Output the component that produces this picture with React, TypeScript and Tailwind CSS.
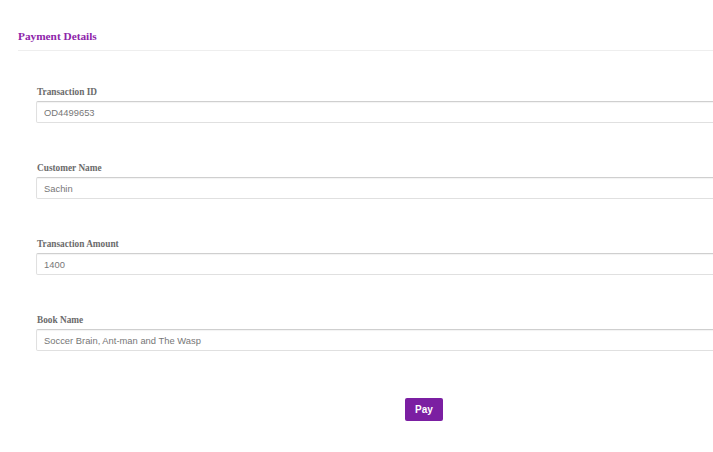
import { useState } from 'react';

const fields = [
    { label: 'Transaction ID', value: 'OD4499653' },
    { label: 'Customer Name', value: 'Sachin' },
    { label: 'Transaction Amount', value: '1400' },
    { label: 'Book Name', value: 'Soccer Brain, Ant-man and The Wasp' },
];

export default function App() {
    const [values, setValues] = useState(fields.map((f) => f.value));

    return (
        <div className="w-full min-h-[452px] overflow-hidden bg-white">
            {/* Header */}
            <div className="pt-[29px] pl-[18px]">
                <h2 className="border-b border-[#eeeeee] pb-[7px] text-[11.3px] leading-[14px] font-bold text-[#8e24aa] font-['Liberation_Serif',serif]">
                    Payment Details
                </h2>
            </div>

            {/* Form */}
            <div className="pl-[36px] pt-[35px]">
                <div className="flex w-[776px] flex-col gap-[39px]">
                    {fields.map((f, i) => (
                        <div key={f.label} className="flex flex-col">
                            <label className="mb-[3px] pl-px text-[9.3px] leading-[12px] font-bold text-[#6b6b6b] font-['Liberation_Serif',serif]">
                                {f.label}
                            </label>
                            <input
                                value={values[i]}
                                onChange={(e) => {
                                    const next = [...values];
                                    next[i] = e.target.value;
                                    setValues(next);
                                }}
                                className="h-[22px] w-full rounded-[2px] border border-[#e0e0e0] border-t-[#cfcfcf] px-[7px] text-[9.4px] text-[#777777] shadow-[inset_0_1px_1px_rgba(0,0,0,0.05)] outline-none font-['Liberation_Sans',Arial,sans-serif]"
                            />
                        </div>
                    ))}
                </div>

                <div className="flex w-[776px] justify-center pt-[47px]">
                    <button className="h-[23px] w-[38px] rounded-[2px] bg-[#7b1fa2] text-[10px] font-bold text-white font-['Liberation_Sans',Arial,sans-serif]">
                        Pay
                    </button>
                </div>
            </div>
        </div>
    );
}
